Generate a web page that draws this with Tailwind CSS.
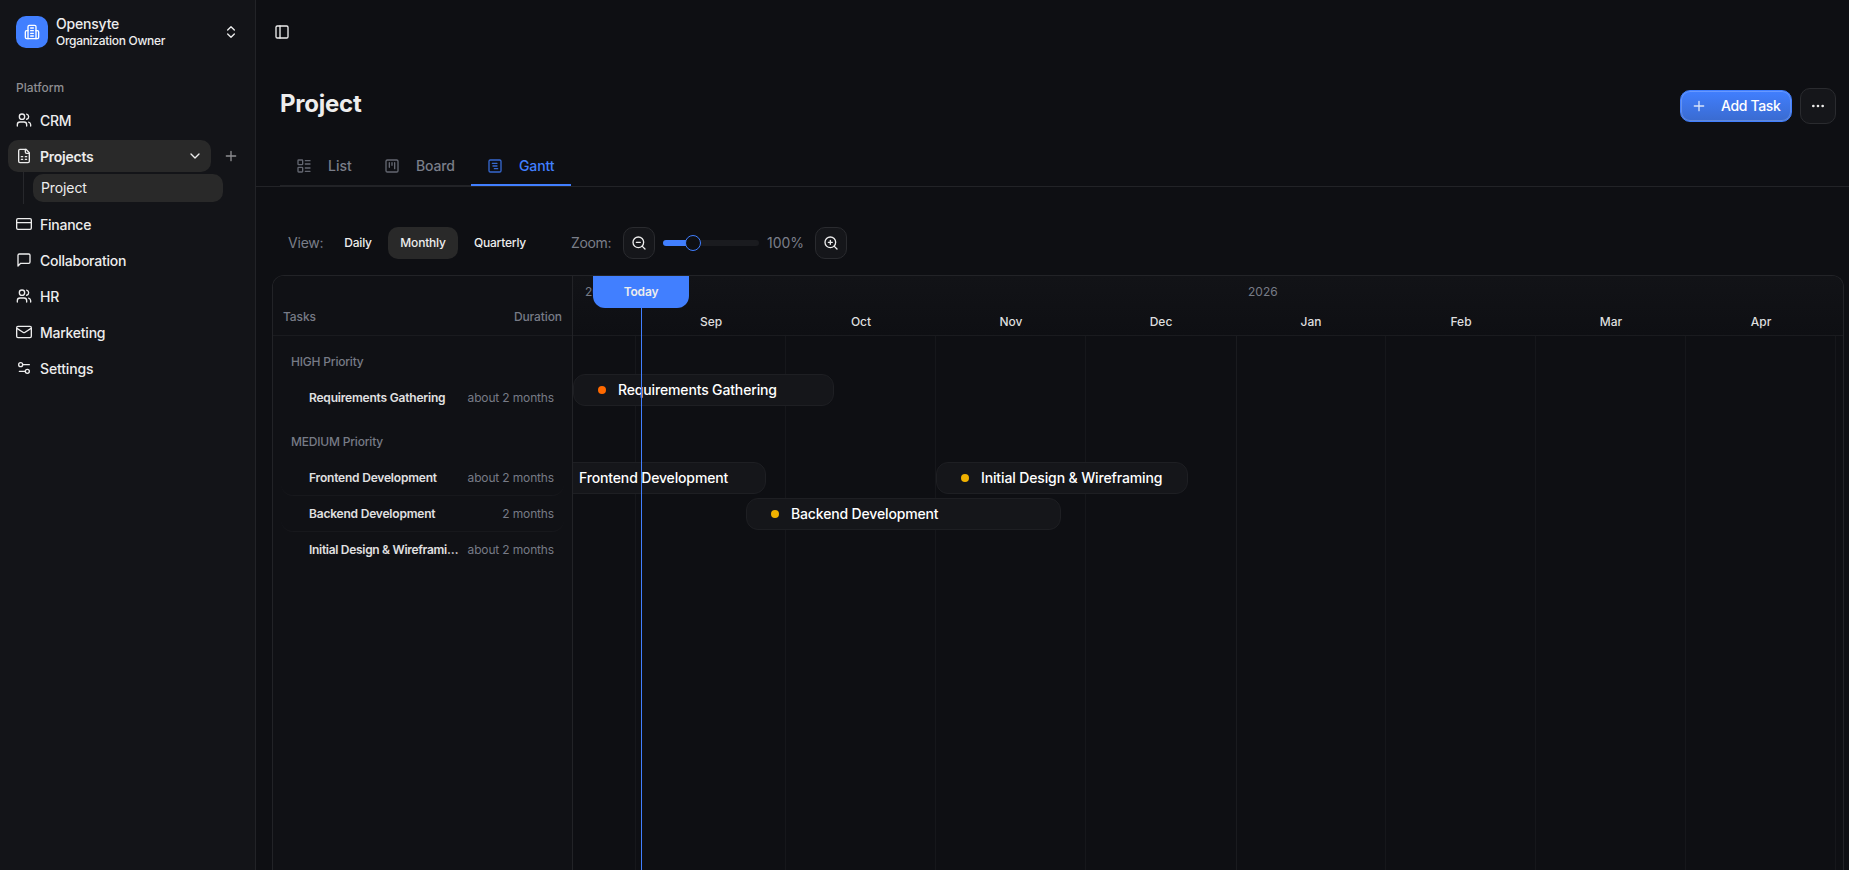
<!DOCTYPE html>
<html lang="en">
<head>
    <meta charset="UTF-8">
    <meta name="viewport" content="width=device-width, initial-scale=1.0">
    <title>Opensyte - Project</title>
    <script src="https://cdn.jsdelivr.net/npm/@tailwindcss/browser@4"></script>
</head>
<body class="flex h-screen overflow-hidden bg-[#0e0f13] font-['Inter','Liberation_Sans',sans-serif] text-sm text-[#ededed]">
    <!-- Lucide icons, shared by the whole page -->
    <svg class="hidden">
        <symbol id="users" viewBox="0 0 24 24"><path d="M16 21v-2a4 4 0 0 0-4-4H6a4 4 0 0 0-4 4v2"/><circle cx="9" cy="7" r="4"/><path d="M22 21v-2a4 4 0 0 0-3-3.87M16 3.13a4 4 0 0 1 0 7.75"/></symbol>
        <symbol id="plus" viewBox="0 0 24 24"><path d="M5 12h14M12 5v14"/></symbol>
    </svg>

    <!-- Sidebar -->
    <aside class="flex w-64 shrink-0 flex-col border-r border-[#222327] bg-[#131418] p-2 font-medium">
        <div class="flex h-12 items-center gap-2 px-2">
            <div class="flex size-8 items-center justify-center rounded-[10px] bg-[#417fff] text-white">
                <svg class="size-4" viewBox="0 0 24 24" fill="none" stroke="currentColor" stroke-width="2" stroke-linecap="round" stroke-linejoin="round"><path d="M6 22V4a2 2 0 0 1 2-2h8a2 2 0 0 1 2 2v18Z"/><path d="M6 10H4a2 2 0 0 0-2 2v8a2 2 0 0 0 2 2h2M18 10h2a2 2 0 0 1 2 2v8a2 2 0 0 1-2 2h-2M10 6h4M10 10h4M10 14h4M10 18h4"/></svg>
            </div>
            <div class="flex flex-1 flex-col">
                <span class="text-sm leading-[17.5px] tracking-[-0.2px]">Opensyte</span>
                <span class="pt-px text-xs leading-4 tracking-[-0.3px]">Organization Owner</span>
            </div>
            <svg class="size-4" viewBox="0 0 24 24" fill="none" stroke="currentColor" stroke-width="2" stroke-linecap="round" stroke-linejoin="round"><path d="m7 15 5 5 5-5M7 9l5-5 5 5"/></svg>
        </div>

        <div class="mt-4 flex h-8 items-center px-2 text-xs text-[#8e8e91]">Platform</div>

        <nav class="flex flex-col gap-1 tracking-[-0.25px]">
            <a class="flex h-8 items-center gap-2 px-2">
                <svg class="size-4" fill="none" stroke="currentColor" stroke-width="2" stroke-linecap="round" stroke-linejoin="round"><use href="#users"/></svg>
                <span class="pt-px">CRM</span>
            </a>
            <div>
                <div class="flex items-center">
                    <a class="flex h-8 w-[203px] items-center gap-2 rounded-[10px] bg-[#292929] px-2">
                        <svg class="size-4" viewBox="0 0 24 24" fill="none" stroke="currentColor" stroke-width="2" stroke-linecap="round" stroke-linejoin="round"><path d="M15 2H6a2 2 0 0 0-2 2v16a2 2 0 0 0 2 2h12a2 2 0 0 0 2-2V7Z"/><path d="M14 2v4a2 2 0 0 0 2 2h4M8 13h2M14 13h2M8 17h2M14 17h2"/></svg>
                        <span class="flex-1 pt-px font-semibold">Projects</span>
                        <svg class="size-4" viewBox="0 0 24 24" fill="none" stroke="currentColor" stroke-width="2" stroke-linecap="round" stroke-linejoin="round"><path d="m6 9 6 6 6-6"/></svg>
                    </a>
                    <svg class="ml-3 size-4 text-[#8e8e91]" fill="none" stroke="currentColor" stroke-width="2" stroke-linecap="round"><use href="#plus"/></svg>
                </div>
                <div class="ml-[15px] h-8 w-[200px] border-l border-[#27282c] pt-0.5 pl-[9px]">
                    <a class="flex h-7 items-center rounded-[10px] bg-[#292929] px-2 font-normal tracking-[-0.1px]">Project</a>
                </div>
            </div>
            <a class="flex h-8 items-center gap-2 px-2">
                <svg class="size-4" viewBox="0 0 24 24" fill="none" stroke="currentColor" stroke-width="2" stroke-linecap="round" stroke-linejoin="round"><rect width="22" height="16" x="1" y="4" rx="2"/><path d="M1 10h22"/></svg>
                <span class="pt-px">Finance</span>
            </a>
            <a class="flex h-8 items-center gap-2 px-2">
                <svg class="size-4" viewBox="0 0 24 24" fill="none" stroke="currentColor" stroke-width="2" stroke-linecap="round" stroke-linejoin="round"><path d="M21 15a2 2 0 0 1-2 2H7l-4 4V5a2 2 0 0 1 2-2h14a2 2 0 0 1 2 2z"/></svg>
                <span class="pt-px">Collaboration</span>
            </a>
            <a class="flex h-8 items-center gap-2 px-2">
                <svg class="size-4" fill="none" stroke="currentColor" stroke-width="2" stroke-linecap="round" stroke-linejoin="round"><use href="#users"/></svg>
                <span class="pt-px">HR</span>
            </a>
            <a class="flex h-8 items-center gap-2 px-2">
                <svg class="size-4" viewBox="0 0 24 24" fill="none" stroke="currentColor" stroke-width="2" stroke-linecap="round" stroke-linejoin="round"><rect width="22" height="17" x="1" y="3.5" rx="2"/><path d="m22 7-8.97 5.7a1.94 1.94 0 0 1-2.06 0L2 7"/></svg>
                <span class="pt-px">Marketing</span>
            </a>
            <a class="flex h-8 items-center gap-2 px-2">
                <svg class="size-4" viewBox="0 0 24 24" fill="none" stroke="currentColor" stroke-width="2" stroke-linecap="round" stroke-linejoin="round"><path d="M20 7h-9M14 17H5"/><circle cx="17" cy="17" r="3"/><circle cx="7" cy="7" r="3"/></svg>
                <span class="pt-px tracking-[-0.15px]">Settings</span>
            </a>
        </nav>
    </aside>

    <main class="flex min-w-0 flex-1 flex-col">
        <header class="flex h-16 shrink-0 items-center pl-[18px]">
            <svg class="size-4" viewBox="0 0 24 24" fill="none" stroke="currentColor" stroke-width="2" stroke-linecap="round" stroke-linejoin="round"><rect width="18" height="18" x="3" y="3" rx="2"/><path d="M9 3v18"/></svg>
        </header>

        <!-- Title and tabs -->
        <section class="flex h-[123px] shrink-0 flex-col border-b border-[#222327] pl-6">
            <div class="flex h-[84px] items-center justify-between pr-[13px]">
                <h1 class="pb-1 text-2xl font-bold tracking-[-0.25px]">Project</h1>
                <div class="flex items-center gap-2">
                    <button class="flex h-8 w-28 items-center rounded-[10px] border border-[#417fff] bg-linear-to-b from-[#417fff] to-[#3a6bd0] pl-2.5 font-medium text-white inset-ring inset-ring-white/20">
                        <svg class="size-4 text-white/80" fill="none" stroke="currentColor" stroke-width="2" stroke-linecap="round"><use href="#plus"/></svg>
                        <span class="ml-3.5 tracking-[-0.35px]">Add Task</span>
                    </button>
                    <button class="flex size-9 items-center justify-center rounded-[10px] border border-[#2a2b2f] bg-[#15161a]">
                        <svg class="size-4" viewBox="0 0 24 24" fill="none" stroke="currentColor" stroke-width="2"><circle cx="12" cy="12" r="1"/><circle cx="19" cy="12" r="1"/><circle cx="5" cy="12" r="1"/></svg>
                    </button>
                </div>
            </div>
            <div class="flex h-[38px] w-[291px] font-medium text-[#7a7e89]">
                <a class="flex w-[88px] items-center border-b border-[#222327] pb-0.5 pl-4">
                    <svg class="size-4 opacity-80" viewBox="0 0 24 24" fill="none" stroke="currentColor" stroke-width="2" stroke-linecap="round" stroke-linejoin="round"><rect width="7" height="7" x="3" y="3" rx="1"/><rect width="7" height="7" x="3" y="14" rx="1"/><path d="M14 4h7M14 9h7M14 15h7M14 20h7"/></svg>
                    <span class="ml-4 pt-px">List</span>
                </a>
                <a class="flex w-[103px] items-center border-b border-[#222327] pb-0.5 pl-4">
                    <svg class="size-4 opacity-80" viewBox="0 0 24 24" fill="none" stroke="currentColor" stroke-width="2" stroke-linecap="round" stroke-linejoin="round"><rect width="18" height="18" x="3" y="3" rx="2"/><path d="M8 7v7M12 7v4M16 7v9"/></svg>
                    <span class="ml-4 pt-px tracking-[-0.15px]">Board</span>
                </a>
                <a class="flex w-[100px] items-center border-b-2 border-[#417fff] pb-px pl-4 text-[#417fff]">
                    <svg class="size-4 opacity-80" viewBox="0 0 24 24" fill="none" stroke="currentColor" stroke-width="2" stroke-linecap="round" stroke-linejoin="round"><rect width="18" height="18" x="3" y="3" rx="2"/><path d="M8 8h7M9 12h6M11 16h5"/></svg>
                    <span class="ml-4 pt-px tracking-[-0.1px]">Gantt</span>
                </a>
            </div>
        </section>

        <!-- View and zoom controls -->
        <section class="mt-10 flex h-8 shrink-0 items-center pl-8 text-[#7a7e89]">
            <span class="w-11 tracking-[-0.2px]">View:</span>
            <div class="flex text-xs font-medium tracking-[-0.2px] text-[#ededed]">
                <button class="h-8 w-[52px]">Daily</button>
                <button class="ml-1 h-8 w-[70px] rounded-[10px] bg-[#292929]">Monthly</button>
                <button class="ml-1 h-8 w-[76px]">Quarterly</button>
            </div>
            <span class="ml-[33px] w-[52px] tracking-[-0.35px]">Zoom:</span>
            <button class="flex size-8 items-center justify-center rounded-[10px] border border-[#2a2b2f] bg-[#15161a] text-[#ededed]">
                <svg class="size-4" viewBox="0 0 24 24" fill="none" stroke="currentColor" stroke-width="2" stroke-linecap="round" stroke-linejoin="round"><circle cx="11" cy="11" r="8"/><path d="m21 21-4.35-4.35M8 11h6"/></svg>
            </button>
            <div class="ml-2 flex w-24 items-center">
                <div class="h-1.5 w-[23px] rounded-l-full bg-[#417fff]"></div>
                <div class="-ml-px size-4 rounded-full border border-[#417fff] bg-[#0e0f13]"></div>
                <div class="h-1.5 flex-1 rounded-r-full bg-[#1a1b1f]"></div>
            </div>
            <span class="ml-2 w-12">100%</span>
            <button class="flex size-8 items-center justify-center rounded-[10px] border border-[#2a2b2f] bg-[#15161a] text-[#ededed]">
                <svg class="size-4" viewBox="0 0 24 24" fill="none" stroke="currentColor" stroke-width="2" stroke-linecap="round" stroke-linejoin="round"><circle cx="11" cy="11" r="8"/><path d="m21 21-4.35-4.35M11 8v6M8 11h6"/></svg>
            </button>
        </section>

        <!-- Gantt chart -->
        <section class="mt-4 mr-[5px] ml-4 flex min-h-0 flex-1 overflow-hidden rounded-t-xl border border-b-0 border-[#222327] text-xs">
            <div class="w-[300px] shrink-0 border-r border-[#222327] bg-[#101115] text-[#777b86]">
                <div class="flex h-[60px] items-end justify-between border-b border-[#1a1b1f] px-2.5 pb-2.5 font-medium tracking-[-0.1px]">
                    <span>Tasks</span>
                    <span>Duration</span>
                </div>
                <div class="px-2 pt-2">
                    <div class="flex h-9 items-center pl-2.5 font-medium tracking-[-0.2px]">HIGH Priority</div>
                    <div class="flex h-9 items-center justify-between pr-2.5 pl-7">
                        <span class="font-semibold tracking-[-0.2px] text-[#e0e0e1]">Requirements Gathering</span>
                        <span class="tracking-[-0.15px]">about 2 months</span>
                    </div>
                    <div class="mt-2 flex h-9 items-center pl-2.5 font-medium tracking-[-0.2px]">MEDIUM Priority</div>
                    <div class="flex h-9 items-center justify-between rounded-xl border-b border-[#17181c] pr-2.5 pl-7">
                        <span class="font-semibold tracking-[-0.2px] text-[#e0e0e1]">Frontend Development</span>
                        <span class="tracking-[-0.15px]">about 2 months</span>
                    </div>
                    <div class="flex h-9 items-center justify-between rounded-xl border-b border-[#17181c] pr-2.5 pl-7">
                        <span class="font-semibold tracking-[-0.2px] text-[#e0e0e1]">Backend Development</span>
                        <span class="tracking-[-0.15px]">2 months</span>
                    </div>
                    <div class="flex h-9 items-center justify-between pr-2.5 pl-7">
                        <span class="w-[151px] truncate font-semibold tracking-[-0.3px] text-[#e0e0e1]">Initial Design &amp; Wireframing</span>
                        <span class="tracking-[-0.15px]">about 2 months</span>
                    </div>
                </div>
            </div>

            <div class="relative flex min-w-0 flex-1 flex-col overflow-hidden">
                <div class="h-[60px] shrink-0 border-b border-[#1a1b1f] bg-linear-to-b from-[#121317] to-[#0e0f13]">
                    <div class="flex h-[30px] items-center pt-0.5 text-[#777b86]">
                        <span class="w-[663px] pl-3">2025</span>
                        <span class="pl-3">2026</span>
                    </div>
                    <div class="flex h-[30px] items-center pt-0.5 pl-[63px] text-center font-medium text-[#dededf]">
                        <span class="w-[150px] shrink-0">Sep</span>
                        <span class="w-[150px] shrink-0">Oct</span>
                        <span class="w-[150px] shrink-0">Nov</span>
                        <span class="w-[150px] shrink-0">Dec</span>
                        <span class="w-[150px] shrink-0">Jan</span>
                        <span class="w-[150px] shrink-0">Feb</span>
                        <span class="w-[150px] shrink-0">Mar</span>
                        <span class="w-[150px] shrink-0">Apr</span>
                    </div>
                </div>
                <div class="flex flex-1">
                    <div class="w-[63px] shrink-0 border-r border-[#16171b]"></div>
                    <div class="w-[150px] shrink-0 border-r border-[#16171b]"></div>
                    <div class="w-[150px] shrink-0 border-r border-[#16171b]"></div>
                    <div class="w-[150px] shrink-0 border-r border-[#16171b]"></div>
                    <div class="w-[151px] shrink-0 border-r border-[#1a1b1f]"></div>
                    <div class="w-[149px] shrink-0 border-r border-[#16171b]"></div>
                    <div class="w-[150px] shrink-0 border-r border-[#16171b]"></div>
                    <div class="w-[150px] shrink-0 border-r border-[#16171b]"></div>
                    <div class="w-[150px] shrink-0 border-r border-[#16171b]"></div>
                </div>

                <!-- Task bars, placed by date -->
                <div class="absolute top-[98px] left-0 flex h-8 w-[261px] items-center rounded-xl border border-[#1e1f23] bg-[#15161a] pl-6 text-sm font-medium text-white">
                    <span class="mr-3 size-2 rounded-full bg-[#ff6900]"></span><span class="tracking-[-0.15px]">Requirements Gathering</span>
                </div>
                <div class="absolute top-[186px] -left-10 flex h-8 w-[233px] items-center rounded-xl border border-[#1e1f23] bg-[#15161a] pl-[45px] text-sm font-medium text-white">
                    <span class="tracking-[-0.15px]">Frontend Development</span>
                </div>
                <div class="absolute top-[222px] left-[173px] flex h-8 w-[315px] items-center rounded-xl border border-[#1e1f23] bg-[#15161a] pl-6 text-sm font-medium text-white">
                    <span class="mr-3 size-2 rounded-full bg-[#f0b100]"></span><span class="tracking-[-0.15px]">Backend Development</span>
                </div>
                <div class="absolute top-[186px] left-[363px] flex h-8 w-[252px] items-center rounded-xl border border-[#1e1f23] bg-[#15161a] pl-6 text-sm font-medium text-white">
                    <span class="mr-3 size-2 rounded-full bg-[#f0b100]"></span><span class="tracking-[-0.13px]">Initial Design &amp; Wireframing</span>
                </div>

                <!-- Today marker -->
                <div class="absolute inset-y-0 left-5 flex w-24 flex-col items-center">
                    <div class="flex h-8 w-24 shrink-0 items-center justify-center rounded-b-xl bg-[#417fff] font-semibold tracking-[-0.2px] text-[#ededed]">Today</div>
                    <div class="ml-px w-px flex-1 bg-[#417fff]"></div>
                </div>
            </div>
        </section>
    </main>
</body>
</html>
